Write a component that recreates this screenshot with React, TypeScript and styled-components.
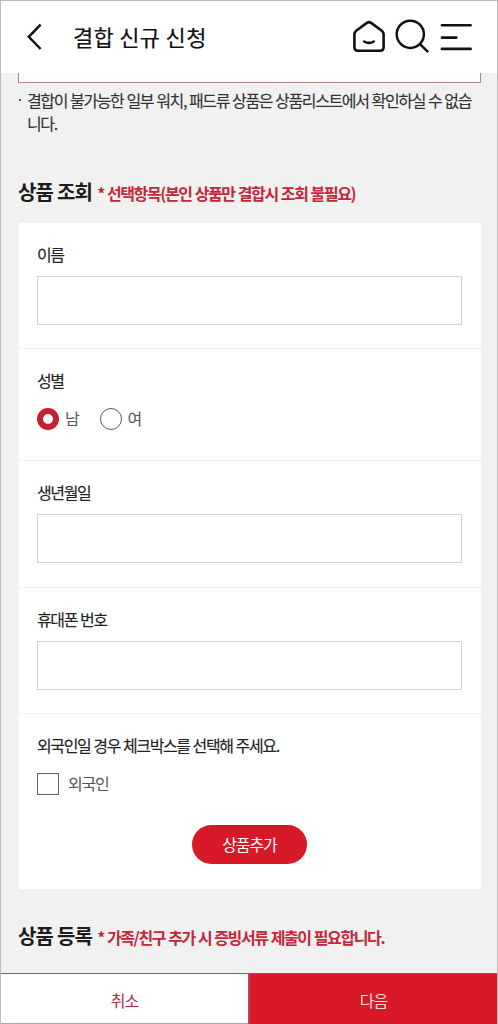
import React, { useState } from "react";
import styled, { createGlobalStyle } from "styled-components";

const GlobalStyle = createGlobalStyle`
  *, *::before, *::after { box-sizing: border-box; }
  body {
    margin: 0;
    background: #f1f1f1;
    color: #222;
    font-family: "Noto Sans CJK KR", "Noto Sans", sans-serif;
  }
  button, input { font: inherit; }
`;

const Screen = styled.div`
  width: 498px;
  height: 1024px;
  display: flex;
  flex-direction: column;
  overflow: hidden;
  background: #f1f1f1;
  border: solid #bcbcbc;
  border-width: 1px 1px 0;
`;

const Header = styled.header`
  flex: none;
  height: 72px;
  padding: 0 24px 2px 25px;
  display: flex;
  align-items: center;
  background: #fff;
`;

const IconButton = styled.button`
  display: flex;
  padding: 0;
  border: 0;
  background: none;
  color: #111;
`;

const Title = styled.h1`
  flex: 1;
  margin: 0 0 0 29px;
  font-size: 22px;
  line-height: 32px;
  font-weight: 400;
  letter-spacing: 0.3px;
  color: #111;
  -webkit-text-stroke: 0.2px currentColor;
`;

const Tools = styled.div`
  display: flex;
  gap: 8px;
`;

const Body = styled.main`
  flex: 1;
  min-height: 0;
  padding: 0 17px;
`;

const NoticeBox = styled.div`
  width: 463px;
  height: 10px;
  border: solid #b08489;
  border-width: 0 1px 1px;
  background: #fdfdfd;
`;

const Notice = styled.p`
  display: flex;
  margin: 6px 0 0;
  font-size: 16px;
  line-height: 23px;
  letter-spacing: -1.37px;
  word-spacing: 0.8px;
  white-space: nowrap;
  color: #333;
  -webkit-text-stroke: 0.15px currentColor;
`;

const Bullet = styled.span`
  flex: none;
  width: 2px;
  height: 2px;
  margin: 10px 6px 0 1px;
  background: #555;
`;

const SectionHeading = styled.h2<{ $top: number }>`
  display: flex;
  align-items: baseline;
  margin: ${(p) => p.$top}px 0 0;
  font-size: 20px;
  line-height: 30px;
  font-weight: 700;
  letter-spacing: -0.8px;
  white-space: nowrap;
  color: #1c1c1c;
`;

const Remark = styled.span`
  margin-left: 5px;
  font-size: 16px;
  font-weight: 700;
  letter-spacing: -1.38px;
  word-spacing: 0.8px;
  color: #c5263a;
`;

const Card = styled.form`
  margin: 15px 0 0 1px;
  width: 462px;
  height: 666px;
  background: #fff;
`;

const Field = styled.div<{ $height: number }>`
  height: ${(p) => p.$height}px;
  padding: 19px 19px 0 18px;
  border-bottom: 1px solid #f3f3f3;
  &:last-child { border-bottom: 0; }
`;

const Label = styled.label`
  display: block;
  font-size: 16px;
  line-height: 24px;
  letter-spacing: -1.35px;
  word-spacing: 0.6px;
  color: #222;
  -webkit-text-stroke: 0.15px currentColor;
`;

const TextInput = styled.input`
  display: block;
  width: 425px;
  height: 49px;
  margin-top: 10px;
  padding: 0 12px;
  border: 1px solid #d4d4d4;
  border-radius: 0;
  background: #fff;
  outline: 0;
`;

const Choices = styled.div`
  display: flex;
  align-items: center;
  height: 24px;
  margin-top: 15px;
  gap: 21px;
`;

const Choice = styled.label<{ $gap: number }>`
  display: flex;
  align-items: center;
  gap: ${(p) => p.$gap}px;
  font-size: 16px;
  line-height: 24px;
  letter-spacing: -1.2px;
  color: #555;
`;

const ChoiceText = styled.span`
  padding-bottom: 2px;
  line-height: 22px;
`;

const Radio = styled.input`
  appearance: none;
  width: 22px;
  height: 22px;
  margin: 0;
  border: 1.5px solid #5c5c5c;
  border-radius: 50%;
  background: #fff;
  &:checked { border: 6px solid #c4202f; }
`;

const Checkbox = styled.input`
  appearance: none;
  width: 22px;
  height: 22px;
  margin: 0;
  border: 1px solid #666;
  background: #fff;
  &:checked { background: #d71826; }
`;

const AddButton = styled.button`
  display: block;
  width: 115px;
  height: 39px;
  margin: 29px auto 0;
  padding: 0 0 2px;
  border: 0;
  border-radius: 20px;
  background: #d71826;
  color: #fff;
  font-size: 16px;
  line-height: 36px;
  letter-spacing: -1.1px;
`;

const Footer = styled.footer`
  flex: none;
  display: flex;
  height: 51px;
  margin: 0 -1px;
`;

const FooterButton = styled.button<{ $primary?: boolean }>`
  flex: 1;
  padding: 2px 0 0;
  border: 1px solid #b9475a;
  border-bottom-color: ${(p) => (p.$primary ? "#d71826" : "#b9a0a4")};
  background: ${(p) => (p.$primary ? "#d71826" : "#fff")};
  color: ${(p) => (p.$primary ? "#fbdfe1" : "#b52a44")};
  font-size: 16px;
  line-height: 24px;
  letter-spacing: -1px;
`;

const stroke = {
  fill: "none",
  stroke: "currentColor",
  strokeLinecap: "round" as const,
  strokeLinejoin: "round" as const,
};

const BackIcon = () => (
  <svg width="18" height="28" viewBox="0 0 18 28" {...stroke} strokeWidth="2.5" strokeLinecap="butt" strokeLinejoin="miter">
    <path d="M14.6 2.6 2.8 14.8 14.6 27" />
  </svg>
);

const HomeIcon = () => (
  <svg width="34" height="34" viewBox="0 0 34 34" {...stroke} strokeWidth="2.6">
    <path d="M4.2 11.7 14.9 3.9Q17 2.3 19.1 3.9L29.8 11.7Q31.6 13.2 31.6 15.3V28.2Q31.6 31.8 28 31.8H6Q2.4 31.8 2.4 28.2V15.3Q2.4 13.2 4.2 11.7Z" />
    <path d="M12.2 22.5Q17 25.3 21.8 22.5" />
  </svg>
);

const SearchIcon = () => (
  <svg width="36" height="34" viewBox="0 0 36 34" {...stroke} strokeWidth="2.5">
    <circle cx="15.3" cy="15.3" r="13.6" />
    <path d="M25 25.2 32.4 32.4" />
  </svg>
);

const MenuIcon = () => (
  <svg width="34" height="34" viewBox="0 0 34 34" {...stroke} strokeWidth="2.6">
    <path d="M2.9 6.3H31.6M2.9 18.6H17.4M2.9 29.9H31.6" />
  </svg>
);

const HomeButton = styled(IconButton)`
  margin-right: 1px;
`;

export default function App() {
  const [gender, setGender] = useState("남");
  return (
    <>
      <GlobalStyle />
      <Screen>
        <Header>
          <IconButton aria-label="뒤로">
            <BackIcon />
          </IconButton>
          <Title>결합 신규 신청</Title>
          <Tools>
            <HomeButton aria-label="홈">
              <HomeIcon />
            </HomeButton>
            <IconButton aria-label="검색">
              <SearchIcon />
            </IconButton>
            <IconButton aria-label="메뉴">
              <MenuIcon />
            </IconButton>
          </Tools>
        </Header>
        <Body>
          <NoticeBox />
          <Notice>
            <Bullet />
            <span>
              결합이 불가능한 일부 워치, 패드류 상품은 상품리스트에서 확인하실 수 없습
              <br />
              니다.
            </span>
          </Notice>
          <SectionHeading $top={42}>
            상품 조회<Remark>* 선택항목(본인 상품만 결합시 조회 불필요)</Remark>
          </SectionHeading>
          <Card>
            <Field $height={126}>
              <Label htmlFor="name">이름</Label>
              <TextInput id="name" />
            </Field>
            <Field $height={112}>
              <Label as="div">성별</Label>
              <Choices>
                {["남", "여"].map((g) => (
                  <Choice key={g} $gap={6}>
                    <Radio type="radio" name="gender" checked={gender === g} onChange={() => setGender(g)} />
                    <ChoiceText>{g}</ChoiceText>
                  </Choice>
                ))}
              </Choices>
            </Field>
            <Field $height={127}>
              <Label htmlFor="birth">생년월일</Label>
              <TextInput id="birth" />
            </Field>
            <Field $height={126}>
              <Label htmlFor="phone">휴대폰 번호</Label>
              <TextInput id="phone" />
            </Field>
            <Field $height={175}>
              <Label as="div">외국인일 경우 체크박스를 선택해 주세요.</Label>
              <Choices>
                <Choice $gap={9}>
                  <Checkbox type="checkbox" />
                  <ChoiceText>외국인</ChoiceText>
                </Choice>
              </Choices>
              <AddButton type="button">상품추가</AddButton>
            </Field>
          </Card>
          <SectionHeading $top={32}>
            상품 등록<Remark>* 가족/친구 추가 시 증빙서류 제출이 필요합니다.</Remark>
          </SectionHeading>
        </Body>
        <Footer>
          <FooterButton>취소</FooterButton>
          <FooterButton $primary>다음</FooterButton>
        </Footer>
      </Screen>
    </>
  );
}
